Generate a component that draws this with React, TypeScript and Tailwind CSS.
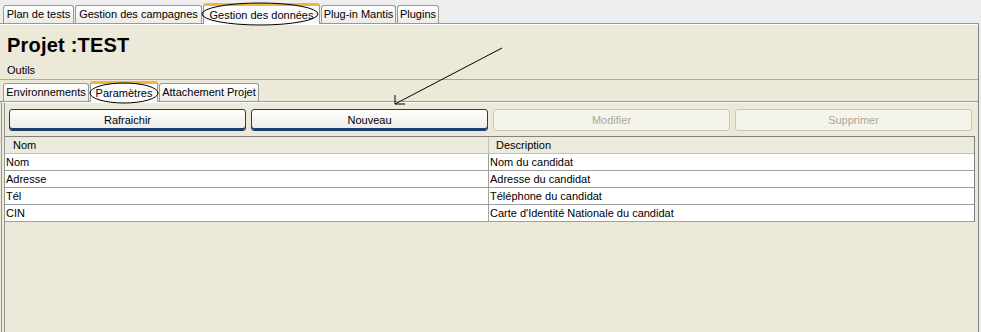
import React from 'react';

const font = { fontFamily: '"Liberation Sans", Arial, sans-serif' };

type TabProps = { label: string; width: number; active?: boolean };

const Tab = ({ label, width, active = false }: TabProps) => (
  <div
    style={{ width }}
    className={`relative flex items-center justify-center text-[11px] leading-none text-black whitespace-nowrap rounded-t-[3px] border border-b-0 ${
      active
        ? 'h-[21px] -mb-px bg-[#fcfcfe] border-[#919b9c] border-t-[3px] border-t-[#f0b640] z-10'
        : 'h-[18px] bg-gradient-to-b from-white to-[#ecebe6] border-[#919b9c]'
    }`}
  >
    {label}
  </div>
);

type BtnProps = { label: string; disabled?: boolean };

const Btn = ({ label, disabled = false }: BtnProps) => (
  <div
    className={`flex-1 h-[22px] flex items-center justify-center rounded-[3px] text-[11px] border ${
      disabled
        ? 'border-[#c9c7ba] text-[#aca899] bg-[#f5f4ea]'
        : 'border-[#1c3f6e] text-black bg-gradient-to-b from-white to-[#ecebe6] shadow-[inset_0_-2px_0_#1c3f6e]'
    }`}
  >
    {label}
  </div>
);

const rows = [
  ['Nom', 'Nom du candidat'],
  ['Adresse', 'Adresse du candidat'],
  ['Tél', 'Téléphone du candidat'],
  ['CIN', "Carte d'Identité Nationale du candidat"],
];

export default function App() {
  return (
    <div className="relative w-[981px] h-[332px] overflow-hidden bg-[#eeeeee]" style={font}>
      {/* top tabs */}
      <div className="h-[23px] flex items-end gap-[1px] pl-[3px]">
        <Tab label="Plan de tests" width={71} />
        <Tab label="Gestion des campagnes" width={127} />
        <Tab label="Gestion des données" width={117} active />
        <Tab label="Plug-in Mantis" width={75} />
        <Tab label="Plugins" width={42} />
      </div>

      <div className="h-[309px] w-[979px] border-t border-t-[#919b9c] border-r border-r-[#808080] bg-[#ece9d8] flex flex-col">
        <div className="h-[56px] border-b border-[#aca899] border-t border-t-white px-[7px] flex flex-col">
          <div className="mt-[10px] text-[20px] font-bold leading-none tracking-[0.2px]">Projet :TEST</div>
          <div className="mt-[10px] text-[11px] leading-none">Outils</div>
        </div>

        {/* sub tabs */}
        <div className="h-[22px] flex items-end gap-[1px] pl-[3px] border-b border-[#919b9c]">
          <Tab label="Environnements" width={86} />
          <Tab label="Paramètres" width={68} active />
          <Tab label="Attachement Projet" width={100} />
        </div>

        <div className="flex-1 ml-[1px] mr-[2px] border-l-[4px] border-double border-l-[#919b9c] border-t border-t-white flex flex-col">
          <div className="flex gap-[5px] pl-[4px] pr-[4px] pt-[6px]">
            <Btn label="Rafraichir" />
            <Btn label="Nouveau" />
            <Btn label="Modifier" disabled />
            <Btn label="Supprimer" disabled />
          </div>

          <div className="mt-[5px] w-[970px] border-t border-[#808080] border-r border-r-[#808080]">
            <div className="h-[17px] flex text-[11px] bg-[#ebeadb] border-b border-[#c5c2b2]">
              <div className="w-[484px] pl-[8px] flex items-center border-r border-[#c5c2b2]">Nom</div>
              <div className="flex-1 pl-[7px] flex items-center">Description</div>
            </div>
            {rows.map(([a, b]) => (
              <div key={a} className="h-[17px] flex text-[11px] bg-white border-b border-[#a0a0a0]">
                <div className="w-[484px] pl-[1px] flex items-center border-r border-[#a0a0a0]">{a}</div>
                <div className="flex-1 pl-[1px] flex items-center">{b}</div>
              </div>
            ))}
          </div>
        </div>
      </div>

      {/* annotations */}
      <svg className="absolute inset-0 z-20 pointer-events-none" width="981" height="332">
        <ellipse cx="260" cy="14" rx="58" ry="11" fill="none" stroke="#000" strokeWidth="1" />
        <ellipse cx="124" cy="93" rx="34" ry="10" fill="none" stroke="#000" strokeWidth="1" />
        <line x1="502" y1="48" x2="395" y2="104" stroke="#000" strokeWidth="1" />
        <polyline points="395,95 395,104 405,104" fill="none" stroke="#000" strokeWidth="1" />
      </svg>
    </div>
  );
}
